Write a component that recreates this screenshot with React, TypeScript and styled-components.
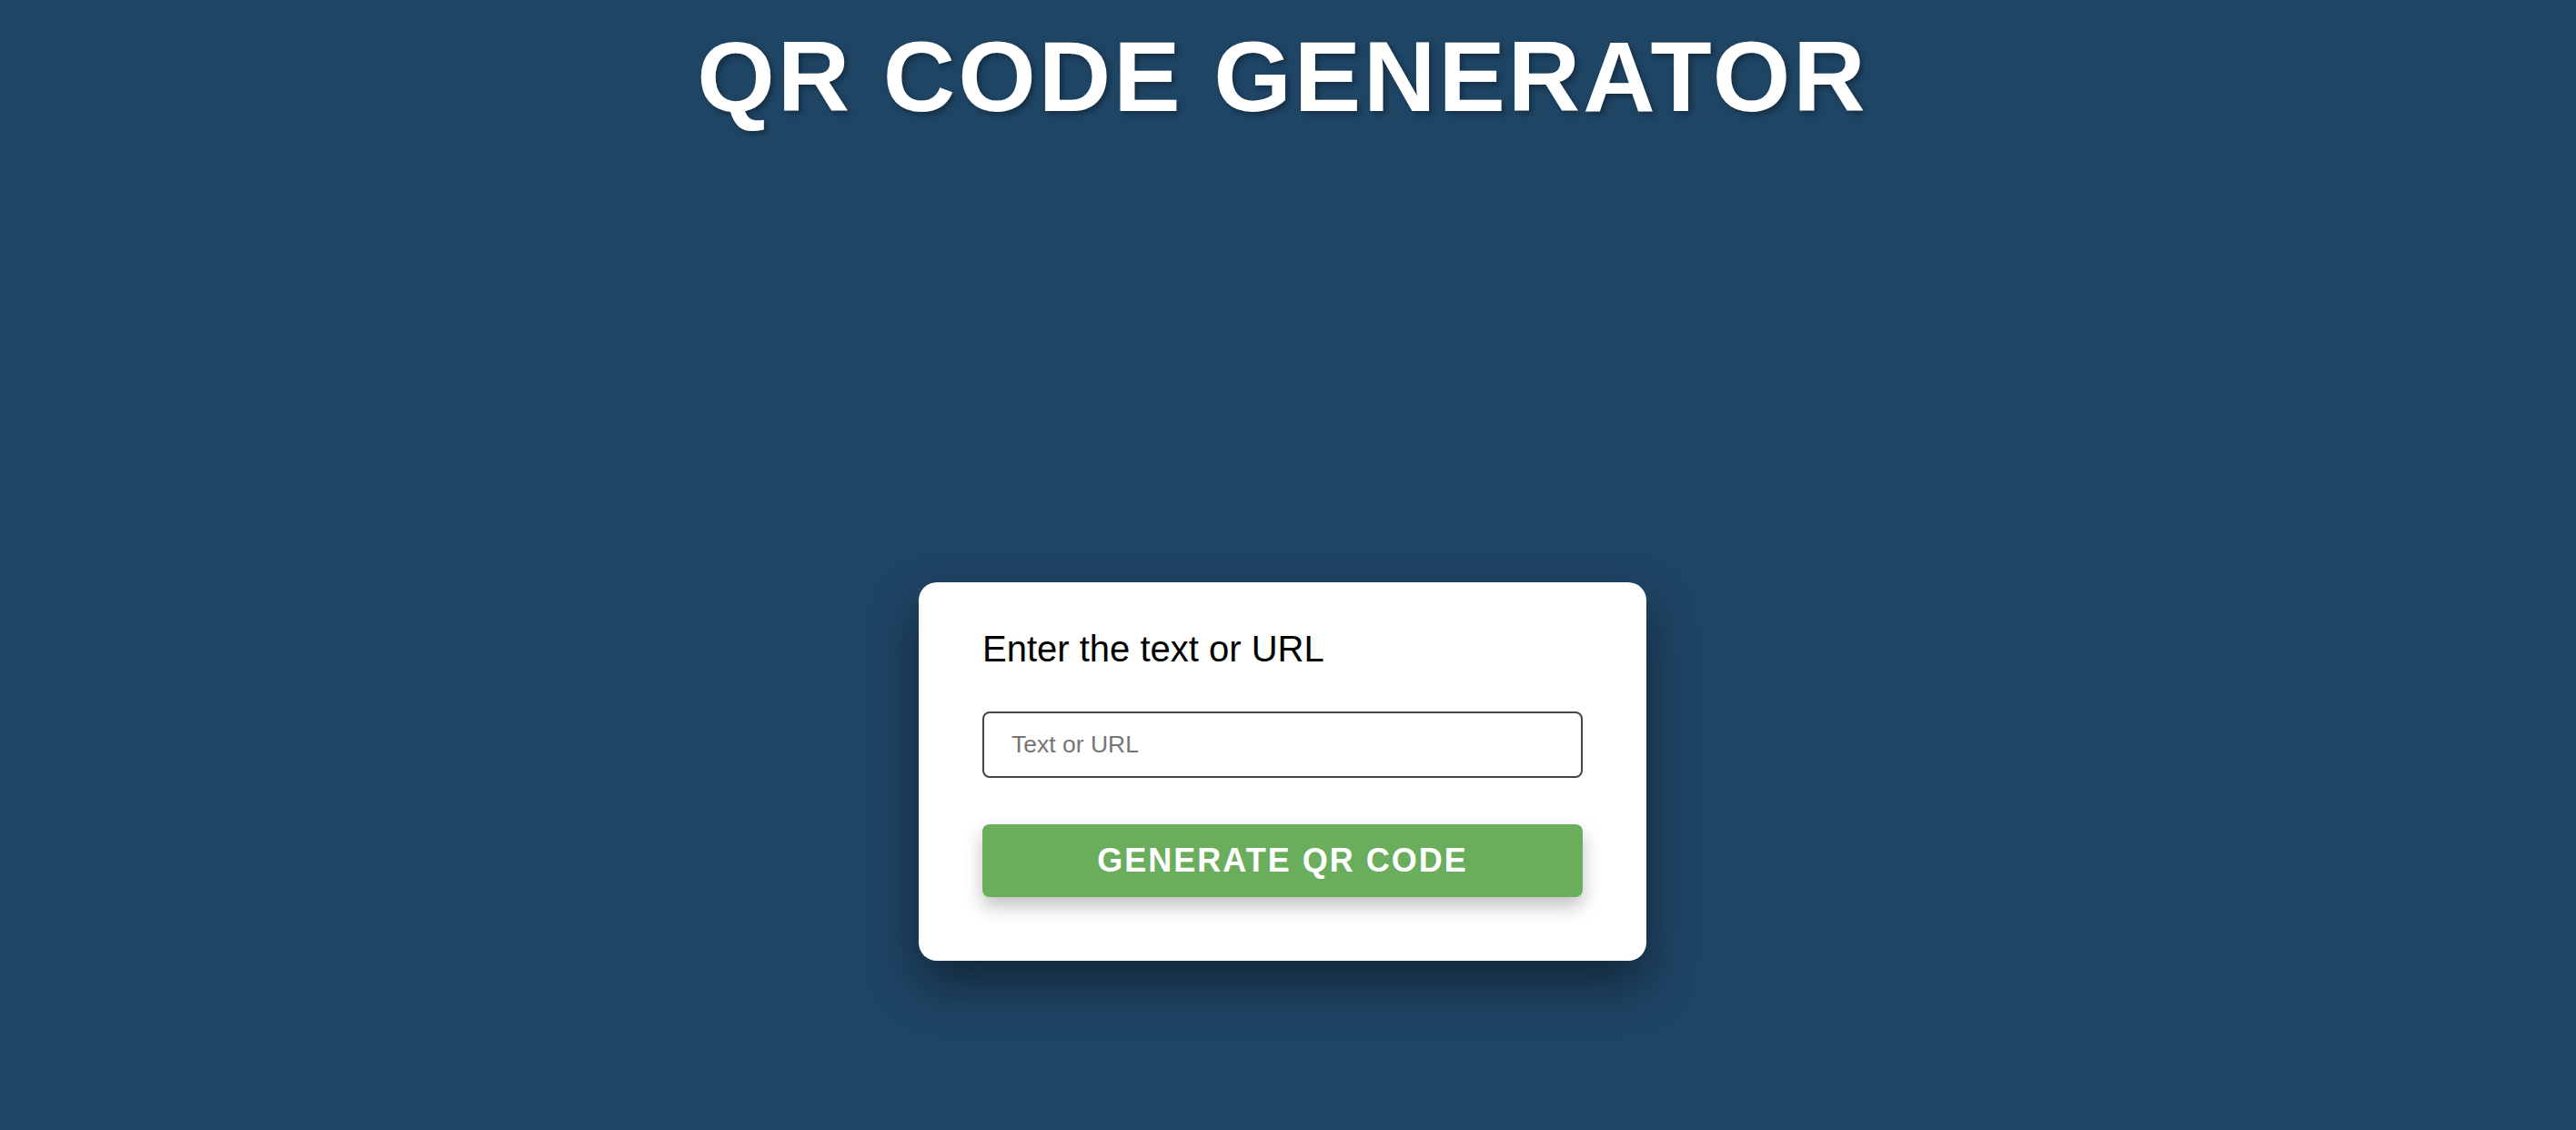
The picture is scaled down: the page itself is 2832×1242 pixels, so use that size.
import React from "react";
import styled, { createGlobalStyle } from "styled-components";

const GlobalStyle = createGlobalStyle`
  * { box-sizing: border-box; }
  html, body {
    margin: 0;
    padding: 0;
    background: #1f4565;
    font-family: "Liberation Sans", Arial, Helvetica, sans-serif;
  }
`;

const Page = styled.main`
  min-height: 100vh;
  background: #1f4565;
  display: flex;
  flex-direction: column;
  align-items: center;
  padding: 21px 12px 0 0;
`;

const Title = styled.h1`
  margin: 0;
  color: #ffffff;
  font-size: 110px;
  font-weight: 700;
  line-height: 1.149;
  letter-spacing: 3px;
  text-shadow: 3px 3px 6px rgba(0, 0, 0, 0.35);
`;

const Card = styled.section`
  margin-top: 493px;
  width: 800px;
  padding: 50px 70px 70px;
  background: #ffffff;
  border-radius: 20px;
  box-shadow: 0 25px 55px rgba(0, 0, 0, 0.45);
  display: flex;
  flex-direction: column;
`;

const Label = styled.label`
  font-size: 40px;
  line-height: 46px;
  color: #000000;
  margin-bottom: 46px;
`;

const Input = styled.input`
  height: 73px;
  width: 100%;
  border: 2px solid #444444;
  border-radius: 8px;
  padding: 0 30px;
  font-family: "Liberation Sans", Arial, sans-serif;
  font-size: 26.5px;
  color: #222;
  outline: none;
  &::placeholder {
    color: #757575;
  }
`;

const Button = styled.button`
  margin-top: 51px;
  height: 80px;
  width: 100%;
  border: none;
  border-radius: 8px;
  background: #69ad5d;
  color: #ffffff;
  font-family: "Liberation Sans", Arial, sans-serif;
  font-size: 36px;
  font-weight: 700;
  letter-spacing: 2px;
  box-shadow: 0 10px 20px rgba(0, 0, 0, 0.25);
  cursor: pointer;
`;

export default function App() {
  return (
    <>
      <GlobalStyle />
      <Page>
        <Title>QR CODE GENERATOR</Title>
        <Card>
          <Label htmlFor="qr-text">Enter the text or URL</Label>
          <Input id="qr-text" type="text" placeholder="Text or URL" />
          <Button type="button">GENERATE QR CODE</Button>
        </Card>
      </Page>
    </>
  );
}
